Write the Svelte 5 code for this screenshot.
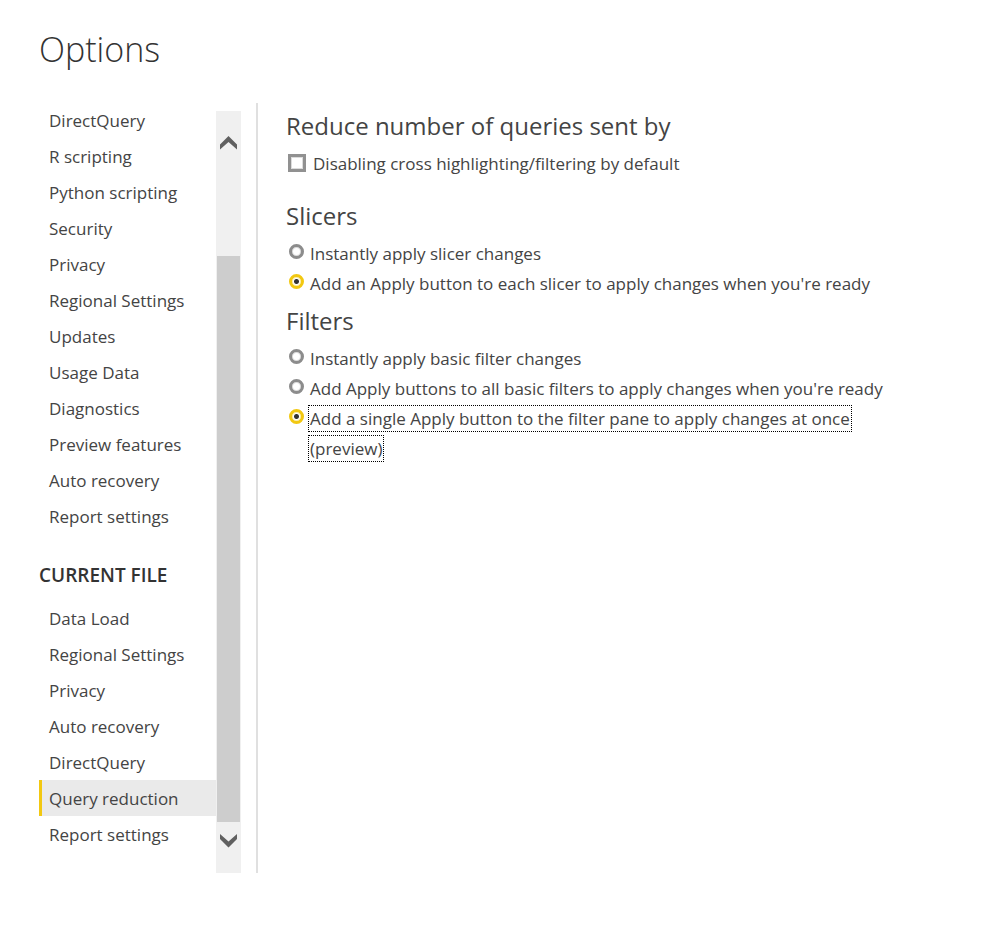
<script>
  const globalPages = ['DirectQuery', 'R scripting', 'Python scripting', 'Security', 'Privacy', 'Regional Settings', 'Updates', 'Usage Data', 'Diagnostics', 'Preview features', 'Auto recovery', 'Report settings'];
  const filePages = ['Data Load', 'Regional Settings', 'Privacy', 'Auto recovery', 'DirectQuery', 'Query reduction', 'Report settings'];

  const slicerChoices = ['Instantly apply slicer changes', "Add an Apply button to each slicer to apply changes when you're ready"];
  const filterChoices = [
    'Instantly apply basic filter changes',
    "Add Apply buttons to all basic filters to apply changes when you're ready",
    'Add a single Apply button to the filter pane to apply changes at once (preview)'
  ];

  let current = $state('Query reduction');
  let noHighlight = $state(false);
  let slicer = $state(1);
  let filter = $state(2);
</script>

<main>
  <h1>Options</h1>
  <div class="body">
    <div class="side">
      <nav>
        <ul>
          {#each globalPages as page}
            <li><a href="#global">{page}</a></li>
          {/each}
        </ul>
        <h2>CURRENT FILE</h2>
        <ul>
          {#each filePages as page}
            <li><a href="#file" class:selected={page === current} onclick={() => (current = page)}>{page}</a></li>
          {/each}
        </ul>
      </nav>
      <div class="scrollbar">
        <button class="up" aria-label="Scroll up">
          <svg width="17" height="14" viewBox="0 0 17 14"><path d="M0 8.500 8.500 0 17 8.500V13.500L8.500 6 0 13.500Z" /></svg>
        </button>
        <div class="thumb"></div>
        <button class="down" aria-label="Scroll down">
          <svg width="17" height="14" viewBox="0 0 17 14"><path d="M0 0 8.500 7.500 17 0V5L8.500 13.500 0 5Z" /></svg>
        </button>
      </div>
    </div>

    <section>
      <h3>Reduce number of queries sent by</h3>
      <label class="check"><input type="checkbox" bind:checked={noHighlight} /><span>Disabling cross highlighting/filtering by default</span></label>

      <fieldset class="slicers">
        <legend>Slicers</legend>
        {#each slicerChoices as text, i}
          <label><input type="radio" name="slicer" value={i} bind:group={slicer} /><span>{text}</span></label>
        {/each}
      </fieldset>

      <fieldset class="filters">
        <legend>Filters</legend>
        {#each filterChoices as text, i}
          <label><input type="radio" name="filter" value={i} bind:group={filter} /><span class:focused={i === 2}><span>{text}</span></span></label>
        {/each}
      </fieldset>
    </section>
  </div>
</main>

<style>
  :global(body) {
    margin: 0;
    background: #fff;
  }
  main {
    box-sizing: border-box;
    padding: 24px 72px 74px 39px;
    font-family: "Segoe UI", "Open Sans", "Noto Sans", sans-serif;
    font-size: 17px;
    color: #444;
  }
  h1 {
    margin: 0 0 29px;
    font-size: 34px;
    font-weight: 300;
    line-height: 50px;
    color: #333;
  }
  .body {
    display: flex;
  }
  .side {
    display: flex;
    flex: none;
    padding-right: 15px;
    border-right: 2px solid #e0e0e0;
  }
  nav {
    width: 177px;
    margin-top: -1px;
    padding-bottom: 21px;
  }
  ul {
    margin: 0;
    padding: 0;
    list-style: none;
  }
  a {
    display: block;
    padding: 2px 0 0 7px;
    border-left: 3px solid transparent;
    line-height: 34px;
    color: inherit;
    text-decoration: none;
  }
  a.selected {
    background: #eaeaea;
    border-color: #f2c811;
  }
  h2 {
    margin: 0;
    padding: 23px 0 7px;
    font-size: 19px;
    font-weight: 600;
    line-height: 36px;
    color: #333;
  }
  .scrollbar {
    box-sizing: border-box;
    display: flex;
    flex-direction: column;
    width: 25px;
    margin-top: 8px;
    padding: 0 1px;
    background: #f0f0f0;
  }
  .scrollbar button {
    display: flex;
    justify-content: center;
    margin: 0;
    border: 0;
    background: none;
  }
  .scrollbar .up {
    height: 145px;
    padding: 25px 0 0;
  }
  .scrollbar .down {
    height: 51px;
    padding: 12px 0 0;
  }
  .scrollbar path {
    fill: #606060;
  }
  .thumb {
    flex: 1;
    background: #cdcdcd;
  }
  section {
    flex: 1;
    min-width: 0;
    padding-left: 28px;
  }
  h3,
  legend {
    margin: 0;
    padding: 0 0 1px;
    font-size: 24px;
    font-weight: 400;
    line-height: 45px;
  }
  fieldset {
    margin: 0;
    padding: 0;
    border: 0;
    min-width: 0;
  }
  .slicers {
    margin-top: 14px;
  }
  .filters {
    margin-top: -1px;
  }
  label {
    display: flex;
    align-items: flex-start;
    line-height: 30px;
  }
  input {
    appearance: none;
    box-sizing: border-box;
    flex: none;
    width: 15px;
    height: 15px;
    margin: 5px 6px 0 3px;
    border: 3px solid #8c8c8c;
    border-radius: 50%;
    background: #fff;
    box-shadow: inset 0 0 0 1px #dcdcdc;
  }
  input:checked {
    border-color: #f2c811;
    background: radial-gradient(circle, #333 2px, #fff 3px);
    box-shadow: inset 0 0 0 1px #fbeeb0;
  }
  .check input {
    width: 18px;
    height: 18px;
    margin: 5px 7px 0 2px;
    border-color: #919191;
    border-radius: 0;
  }
  .focused {
    margin-left: -2px;
  }
  .focused span {
    padding: 1px;
    border: 1px dotted #000;
    box-decoration-break: clone;
    -webkit-box-decoration-break: clone;
  }
</style>
